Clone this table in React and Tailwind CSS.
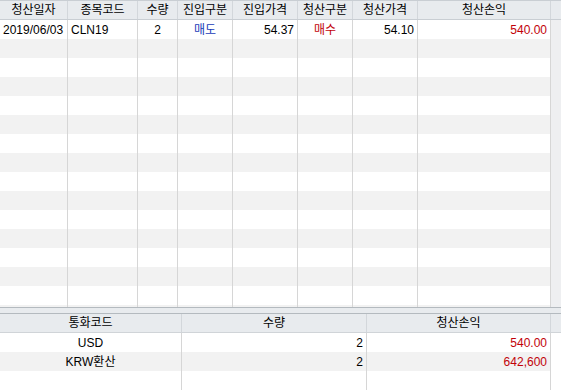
import React from "react";

const topCols = [
  { label: "청산일자", w: "w-[68px]" },
  { label: "종목코드", w: "w-[70px]" },
  { label: "수량", w: "w-[40px]" },
  { label: "진입구분", w: "w-[55px]" },
  { label: "진입가격", w: "w-[65px]" },
  { label: "청산구분", w: "w-[55px]" },
  { label: "청산가격", w: "w-[65px]" },
  { label: "청산손익", w: "w-[133px]" },
];

const trade = [
  { v: "2019/06/03", cls: "justify-start pl-[3px]" },
  { v: "CLN19", cls: "justify-start pl-[3px]" },
  { v: "2", cls: "justify-center" },
  { v: "매도", cls: "justify-center", color: "text-blue-800" },
  { v: "54.37", cls: "justify-end pr-[3px]" },
  { v: "매수", cls: "justify-center", color: "text-red-700" },
  { v: "54.10", cls: "justify-end pr-[3px]" },
  { v: "540.00", cls: "justify-end pr-[3px]", color: "text-red-700" },
];

const bottomCols = [
  { label: "통화코드", w: "w-[182px]" },
  { label: "수량", w: "w-[185px]" },
  { label: "청산손익", w: "w-[184px]" },
];

const summary = [
  ["USD", "2", "540.00"],
  ["KRW환산", "2", "642,600"],
  null,
];

const font = "font-['Liberation_Sans','Noto_Sans_CJK_KR',sans-serif]";

const App = () => {
  const rows = Array.from({ length: 16 }, (_, i) => i);

  return (
    <div className={`w-[561px] h-[390px] overflow-hidden bg-white text-[12px] text-black ${font} flex flex-col`}>
      {/* Top grid */}
      <div className="h-[314px] overflow-hidden flex flex-col">
        <div className="flex h-[20px] shrink-0 bg-[#e8ebee] border-t border-b border-[#c9ced3]">
          {topCols.map((c) => (
            <div key={c.label} className={`${c.w} shrink-0 border-r border-[#d3d7db] flex items-center justify-center`}>
              {c.label}
            </div>
          ))}
          <div className="flex-1" />
        </div>
        {rows.map((i) => (
          <div key={i} className={`flex h-[19px] shrink-0 ${i % 2 ? "bg-[#f2f2f2]" : "bg-white"}`}>
            {topCols.map((c, j) => (
              <div
                key={c.label}
                className={`${c.w} shrink-0 border-r border-[#d6d6d6] flex items-center whitespace-nowrap ${i === 0 ? trade[j].cls : ""}`}
              >
                {i === 0 && <span className={trade[j].color || "text-black"}>{trade[j].v}</span>}
              </div>
            ))}
            <div className="flex-1 bg-[#eeeff1]" />
          </div>
        ))}
      </div>

      {/* Splitter */}
      <div className="h-[7px] shrink-0 bg-[#e8ebee] border-t border-b border-[#b4babf]" />

      {/* Bottom grid */}
      <div className="flex-1 flex flex-col">
        <div className="flex h-[19px] shrink-0 bg-[#e8ebee] border-b border-[#d0d4d8]">
          {bottomCols.map((c) => (
            <div key={c.label} className={`${c.w} shrink-0 border-r border-[#d3d7db] flex items-center justify-center`}>
              {c.label}
            </div>
          ))}
          <div className="flex-1" />
        </div>
        {summary.map((r, i) => (
          <div key={i} className={`flex h-[19px] shrink-0 ${i % 2 ? "bg-[#f2f2f2]" : "bg-white"}`}>
            <div className="w-[182px] shrink-0 border-r border-[#d6d6d6] flex items-center justify-center">
              {r ? r[0] : ""}
            </div>
            <div className="w-[185px] shrink-0 border-r border-[#d6d6d6] flex items-center justify-end pr-[3px]">
              {r ? r[1] : ""}
            </div>
            <div className="w-[184px] shrink-0 border-r border-[#d6d6d6] flex items-center justify-end pr-[3px] text-red-700">
              {r ? r[2] : ""}
            </div>
            <div className="flex-1 bg-white" />
          </div>
        ))}
      </div>
    </div>
  );
};

export default App;
